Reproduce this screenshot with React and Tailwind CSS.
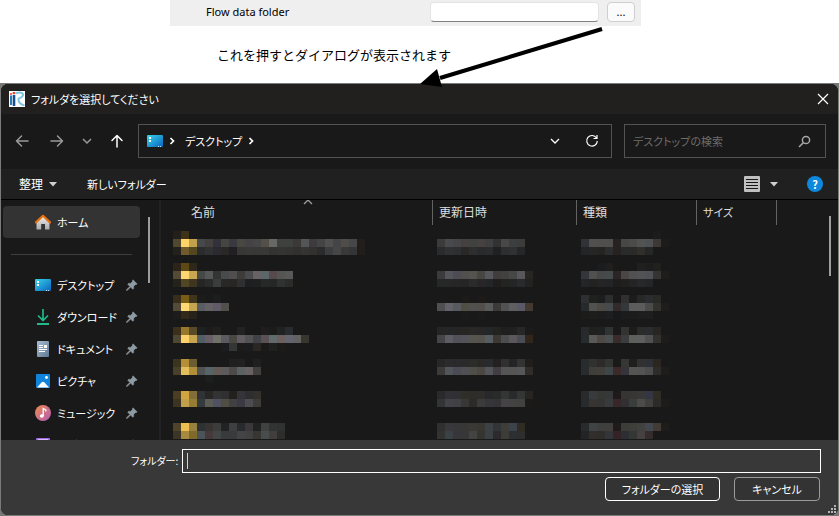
import React from "react";

const JP = "font-['Noto_Sans','Noto_Sans_CJK_JP',sans-serif]";
const UI = "font-['Noto_Sans_CJK_JP',sans-serif] [font-feature-settings:'palt']";

// Censored file rows: each string is one line of 8px blocks, "-" leaves a block empty.
const FILES = [
  {
    name: [
      "231f1a 3d3118",
      "51482f ffd366 c2a14d 45494b 44403f 33323a 454544 3a3940 484840 434346 464647 545048 666965 3f413d 3f413f 3b3938 545655 3d3b3d 444445 505051 454446 504d49 454749 231e1b",
      "24211c 705a2b 54471f 2a2b2b 303133 2c2a2e 292826 202023 373736 393939 383838 383837 333332 343534 323332 31302f 343434 323130 2a2b2c 3d3d3e 464646 39393a 353536 211d1b",
    ],
    date: [
      "",
      "3b3b3b 484a4e 464648 454140 404141 474241 3f3f40 333233 484947 3d3e3f 3c3c3b",
      "2a2b2d 303133 2e2f31 292827 2d2e2f 2b2a2a 2b2c2d 212121 2d2e2f 303132 262626",
    ],
    type: [
      "- - - - - - - - - 1c1c1c",
      "303238 51504e 504f4d 504f4e 252221 474746 4b4b4a 525355 4f5053 3d3833 1e1c1b",
      "232425 262625 242423 2b2d2f 252221 292a2b 2a2a29 302f2c 252626",
    ],
  },
  {
    name: [
      "2c2419 5e4814 2f271a",
      "544a34 ffd572 c8a750 464848 565857 343434 474b4b 504e4e 3e3c39 4b4b4d 686265 5a666a 564a4d 555555 585858",
      "25221b 524522 3e361f 252525 2a2b2b 3c3c3c 292828 272625 2e3032 1f1f1f 202020 272928 252626 303232 2b2b2a",
    ],
    date: [
      "",
      "3b3b3b 54545b 4e4b55 52504f 56524e 484643 56575c 403d3c 414140 464847 5a575c 272625",
      "262827 272727 262626 252525 2b2b2b 282627 242527 201e1d 222322 242525 292a2b 222221",
    ],
    type: [
      "- - 1b1c1d 201f1e - - - 202020 1d1d1d 20201f",
      "34343c 51504f 474849 454a4b 2b2526 484746 515151 535357 505156 363432 1f1d1c",
      "242526 222221 252525 222425 1e1c1c 20201f 242424 272829 242525",
    ],
  },
  {
    name: [
      "382d18 795d15 3f351d 1c1c1c - 1d1d1d",
      "544a35 ffd873 c6a550 5a5c64 656165 615a66 52504a",
      "1d1c1a 32291a 28231a",
    ],
    date: [
      "- - - 1c1b1a - 1c1b1a",
      "4f4f4f 626268 575a5e 504e45 52504e 514e4c 595a5a 3b3a38 515352 5f5f62 5b5965 43392f",
      "- - - 1b1b1b - 1c1b1b",
    ],
    type: [
      "2d2f30 20201f 1c1d1e 2c2d2d 1b1a1a 30312e 1c1c1c 272727 2b2c2f 292928",
      "262a2d 51514f 4d4947 454a4d 322a2a 35383b 5c5c5d 5c5c5c 4b4b4a 33322f 1e1d1c",
      "1c1c1b 1e1e1d 1c1c1c 1d1e1f - 1c1c1c 1c1c1c 1e1e1f 1e1e1e",
    ],
  },
  {
    name: [
      "3c301b 98782b 594b27 1d2122 1e1b1b 20201e - - 222222 - - 1f1d1d 1b1b1a 212222 2a2b2e",
      "504730 ffd16a c7a64e 525d64 685e67 70726a 5a5a60 484742 605c61 545155 40424a 5b5054 616b6c 6c5f5e 62646f 646162 37362f",
      "- - - - - - 1b1c20 353536 1b1b1a 1b1c1d 292623 1a1a19 1f2120 1d1a1a",
    ],
    date: [
      "252523 242526 252526 272624 292827 272728 232728 232321 1e1f1e 202020 272727 1d1b1a",
      "444449 5c5c62 52515a 54535a 56554e 55534b 575c63 3e3835 4b4d4e 5b575b 4b4d56 32251a",
    ],
    type: [
      "27292c 20201f 1e2223 313232 1a1a1a 333333 1c1c1b 2b2b2b 2b2c2f 272625",
      "262b2d 5a5958 4e4946 4a4f52 392c2b 3a3c3f 5e5e5d 5e5e5f 515151 32312e 1e1c1b",
    ],
  },
  {
    name: [
      "3d341e b48f35 6a5c33 - - - - 202020 212121 - 202020",
      "484029 e2be5d b18f38 505354 586367 645b57 5d5a5c 4d4b4a 5c6164 686262 41403f",
      "- - - - 1c1e1d",
    ],
    date: [
      "272728 2b2b2d 2a292b 2a2a28 2c2c28 2a2928 292a2d 222021 30302f 242426 333331 211d1b",
      "3d3b3a 51565a 4c4a54 504f53 4f4e47 4c4743 53555b 423d43 555555 555555 565759 302c29",
    ],
    type: [
      "282c2e 31312f 2c2b27 333533 1b1a1a 363633 1f1f1e 313131 2e3038 2b2720",
      "282c2e 403e3b 403f39 3e464a 3b2a29 34343a 555553 545353 4b4c4b 2d2c2a 1f1d1b",
    ],
  },
  {
    name: [
      "4b3d20 d0a540 836e3a 303335 292725 333334 303030 22211e 353439 2e2d30 32312c",
      "3c3423 c2a04b 977d34 353a3c 5c5c57 505261 504d43 414142 3b3944 4d4c51 3d3c39",
    ],
    date: [
      "2a2a2a 303035 303033 302e28 2d2d2a 2e2d2b 28282b 292b2b 343635 282a2c 343635 262523",
      "333435 424248 414044 393733 2b2b27 3b3b3b 36363a 353336 434443 434343 424241 1c1a19",
    ],
    type: [
      "282a2b 383a3b 363635 353738 1e1a1b 353533 373635 383839 343644 302d22",
      "272b2d 373533 353432 383b3d 372728 303032 393e3b 4b4b4b 403f3e 2b2b2a 1e1c1b",
    ],
  },
  {
    name: [
      "4f4328 edbf4e 99803f 2d3132 393434 3b3c3b 212222 403f3f 292a2d 3a383b 212223 404241 323333 303131",
      "3c3425 a78a40 806a2b 4b5559 45393a 434646 383a3b 383b3d 444446 414142 383632 474c4d 413e3d 2d2d2d",
    ],
    date: [
      "303031 38383d 373639 373736 3b3934 393732 3b4144 333435 3f3d39 3b444a 302c24",
      "333331 3a4246 37363a 373739 434341 343430 3b4143 2c2a2c 3e3c39 2d3033 2d2e2d",
    ],
    type: [
      "282b2c 404444 3e3f3f 403f3d 1f1b1c 3c3c39 3e3e3b 414140 434850 413b34 1f1d1b",
      "232425 312e2c 2f2e2a 34353b 352425 2c2e34 343834 464040 352d2c",
    ],
  },
];

function Mosaic({ lines }) {
  const grid = lines.map((l) => l.split(" "));
  const cols = Math.max(...grid.map((l) => l.length));
  return (
    <svg width={cols * 8} height={24} shapeRendering="crispEdges" aria-hidden="true" className="block">
      {grid.flatMap((line, y) =>
        line.map((c, x) =>
          c.length === 6 ? <rect key={`${x}-${y}`} x={x * 8} y={y * 8} width="8" height="8" fill={`#${c}`} /> : null
        )
      )}
    </svg>
  );
}

function Chevron({ dir = "down", className = "", size = 10, width = 1.3 }) {
  const d = { down: "M1 3l4 4 4-4", up: "M1 7l4-4 4 4", right: "M3.5 2l3 3-3 3" }[dir];
  return (
    <svg width={size} height={size} viewBox="0 0 10 10" className={className} fill="none" stroke="currentColor" strokeWidth={width}>
      <path d={d} />
    </svg>
  );
}

function Arrow({ rotate = "" }) {
  return (
    <svg width="14" height="14" viewBox="0 0 14 14" fill="none" stroke="currentColor" strokeWidth="1.5" strokeLinecap="round" strokeLinejoin="round" className={rotate}>
      <path d="M13 7H1.5M6.5 2L1.5 7l5 5" />
    </svg>
  );
}

function Caret() {
  return (
    <svg width="8" height="5" viewBox="0 0 8 5">
      <path d="M0 0h8L4 4.6z" fill="#d0d0d0" />
    </svg>
  );
}

function AppLogo() {
  return (
    <svg width="16" height="16" viewBox="0 0 16 16" aria-hidden="true">
      <rect width="16" height="16" fill="#fff" />
      <path d="M1 4.500h2V14H1z" fill="#2e78b8" />
      <path d="M3.700 4h2.600v11H3.700z" fill="#164f90" />
      <rect x="1" y="2" width="2" height="2" fill="#ee6a55" />
      <rect x="3.700" y="1" width="2.600" height="2.200" fill="#e5402e" />
      <path d="M7 2.300c3.800-1.400 7.200-.9 7 1.700-.2 2.200-2.600 3-4.400 3.600C9 10.500 11 13.200 15.500 14.400" fill="none" stroke="#7cc6e2" strokeWidth="2" />
    </svg>
  );
}

function DesktopIcon() {
  return (
    <svg width="16" height="16" viewBox="0 0 16 16" aria-hidden="true">
      <defs>
        <linearGradient id="desk" x1="0" y1="0" x2="1" y2="1">
          <stop offset="0" stopColor="#36d4ea" />
          <stop offset="1" stopColor="#0b63c0" />
        </linearGradient>
      </defs>
      <rect y="2" width="16" height="12" rx="1" fill="url(#desk)" />
      <path d="M2 4h2v2H2zM2 7h2v2H2z" fill="#fff" />
      <path d="M11 13h1v1h-1zM13 13h1v1h-1z" fill="#bfe4ff" />
    </svg>
  );
}

function HomeIcon() {
  return (
    <svg width="16" height="16" viewBox="0 0 16 16" aria-hidden="true">
      <defs>
        <linearGradient id="wall" x1="0" y1="0" x2="0" y2="1">
          <stop offset="0" stopColor="#f1f1f1" />
          <stop offset="1" stopColor="#a9a9a9" />
        </linearGradient>
      </defs>
      <path d="M1.500 7.500L8 2l6.500 5.500V15a.6.6 0 0 1-.6.6H10V10H6.200v5.600H2.100a.6.6 0 0 1-.6-.6z" fill="url(#wall)" />
      <path d="M1 8.400L8 1.800l7 6.600" fill="none" stroke="#e8710f" strokeWidth="2.200" strokeLinecap="round" strokeLinejoin="round" />
    </svg>
  );
}

function DownloadIcon() {
  return (
    <svg width="16" height="16" viewBox="0 0 16 16" aria-hidden="true" fill="none" stroke="#22b88a" strokeWidth="1.700">
      <path d="M8 0v11M3 6.500L8 11.500l5-5" />
      <path d="M2 15h12" strokeWidth="2" />
    </svg>
  );
}

function DocumentIcon() {
  return (
    <svg width="16" height="16" viewBox="0 0 16 16" aria-hidden="true">
      <defs>
        <linearGradient id="doc" x1="0" y1="0" x2="1" y2="1">
          <stop offset="0" stopColor="#a9bdd2" />
          <stop offset="1" stopColor="#5f7893" />
        </linearGradient>
      </defs>
      <rect x="2" width="12" height="16" rx="1" fill="url(#doc)" />
      <path d="M4 4h4v1H4zM4 6h4v1H4zM9 4h3v3H9zM4 8h8v1H4zM4 10h6v1H4z" fill="#fff" />
    </svg>
  );
}

function PictureIcon() {
  return (
    <svg width="16" height="16" viewBox="0 0 16 16" aria-hidden="true">
      <rect x="1" y="1" width="14" height="14" rx="1" fill="#1283da" />
      <path d="M2 14.500L6.500 9.500q1.500-1.600 3 0l4.500 5z" fill="#fff" />
      <circle cx="11.500" cy="4.500" r="1.400" fill="#fff" />
    </svg>
  );
}

function MusicIcon() {
  return (
    <svg width="16" height="16" viewBox="0 0 16 16" aria-hidden="true">
      <defs>
        <linearGradient id="mus" x1="0" y1="0" x2="1" y2="1">
          <stop offset="0" stopColor="#f08a4b" />
          <stop offset="1" stopColor="#b25cb8" />
        </linearGradient>
      </defs>
      <circle cx="8" cy="8" r="8" fill="url(#mus)" />
      <ellipse cx="6.800" cy="11" rx="2" ry="1.800" fill="#fff" />
      <path d="M8.200 11V3.500l2.600 1.300v1.800" fill="none" stroke="#fff" strokeWidth="1.300" />
    </svg>
  );
}

function VideoIcon() {
  return (
    <svg width="16" height="16" viewBox="0 0 16 16" aria-hidden="true">
      <rect x="1" y="1" width="14" height="14" rx="1" fill="#a26be6" />
      <path d="M3 2h10v1H3z" fill="#d9b8ff" />
    </svg>
  );
}

function PinIcon() {
  return (
    <svg width="12" height="12" viewBox="0 0 12 12" aria-hidden="true">
      <path d="M7 .8L11.200 5l-1 .6-.6-.1-2 2 .1 1.900-.9.9L4.600 8.100 1.400 11.300l-.9.200.2-.9L3.900 7.400 1.700 5.200l.9-.9 1.900.1 2-2-.1-.6z" fill="#8f9ba3" stroke="#8f9ba3" strokeWidth=".6" />
    </svg>
  );
}

const PLACES = [
  ["デスクトップ", DesktopIcon],
  ["ダウンロード", DownloadIcon],
  ["ドキュメント", DocumentIcon],
  ["ピクチャ", PictureIcon],
  ["ミュージック", MusicIcon],
  ["ビデオ", VideoIcon],
];

const HEADERS = [
  ["名前", "pl-[30px] text-[12px]"],
  ["更新日時", "pl-1.5 text-[12px]"],
  ["種類", "pl-1.5 text-[12px]"],
  ["サイズ", "pl-1.5 text-[11px]"],
];

function Setting() {
  return (
    <div className="ml-[170px] flex h-[26px] w-[471px] items-center bg-[#efefef] pb-0.5 pl-9 pr-1.5 text-black">
      <label htmlFor="flow" className="grow text-[11px] leading-4 font-['Noto_Sans',sans-serif]">Flow data folder</label>
      <input id="flow" className="h-5 w-[169px] rounded-sm border border-[#e4e4e4] border-b-[#808080] bg-white px-1 text-xs" />
      <button type="button" aria-label="参照" className="ml-2 h-5 w-7 rounded border border-[#cfcfcf] bg-[#fbfbfb] text-[11px] leading-4">...</button>
    </div>
  );
}

export default function App() {
  return (
    <main className="relative bg-white">
      <Setting />
      <p className={`${JP} h-[57px] pl-[217px] pt-5 text-[13px] leading-[18px] text-black`}>これを押すとダイアログが表示されます</p>

      <svg className="absolute left-1/2 top-6 z-10" width="190" height="66" viewBox="0 0 190 66" aria-hidden="true">
        <path d="M182 5L20 54" stroke="#000" strokeWidth="4" />
        <path d="M0 60L17 45 22 63z" fill="#000" />
      </svg>

      <div className="bg-[#777777]">
        <section role="dialog" aria-label="フォルダを選択してください" className={`${UI} overflow-hidden rounded-lg border border-[#7b7b7b] bg-[#191919] text-[11px] leading-4 text-white`}>
          <header className="flex h-[30px] items-center bg-[#21201f] pl-2 pr-[9px]">
            <AppLogo />
            <h1 className="ml-1.5 grow">フォルダを選択してください</h1>
            <button type="button" aria-label="閉じる">
              <svg width="12" height="12" viewBox="0 0 12 12" stroke="#fff" strokeWidth="1.200"><path d="M1 1l10 10M11 1L1 11" /></svg>
            </button>
          </header>

          <nav className="flex h-[55px] items-center pb-px pl-3.5 pr-3 text-[#9a9a9a]">
            <button type="button" aria-label="戻る"><Arrow /></button>
            <button type="button" aria-label="進む" className="ml-[21px]"><Arrow rotate="rotate-180" /></button>
            <button type="button" aria-label="履歴" className="ml-[18px]"><Chevron width={1.500} /></button>
            <button type="button" aria-label="上へ" className="ml-[18px] text-white"><Arrow rotate="rotate-90" /></button>
            <div className="ml-3.5 flex h-[34px] grow items-center border border-[#535353] pl-2 pr-3 text-white">
              <DesktopIcon />
              <Chevron dir="right" className="ml-1" width={1.700} />
              <span className="ml-2">デスクトップ</span>
              <Chevron dir="right" className="ml-1" width={1.700} />
              <button type="button" aria-label="候補" className="ml-auto"><Chevron /></button>
              <button type="button" aria-label="更新" className="ml-[25px]">
                <svg width="14" height="14" viewBox="0 0 14 14" fill="none" stroke="#fff" strokeWidth="1.200"><path d="M11.500 4A5.300 5.300 0 1 0 12.300 7M12 1v3.500H8.500" /></svg>
              </button>
            </div>
            <div className="ml-3 flex h-[34px] w-[202px] items-center border border-[#535353] pl-2 pr-3.5">
              <input aria-label="検索" placeholder="デスクトップの検索" className="min-w-0 grow bg-transparent outline-none placeholder:text-[#6d6d6d]" />
              <svg width="13" height="13" viewBox="0 0 13 13" fill="none" stroke="#a6a6a6" strokeWidth="1.500"><circle cx="8" cy="5" r="3.600" /><path d="M5.400 7.600L1 12" /></svg>
            </div>
          </nav>

          <div className="flex h-[31px] items-center border-b border-black bg-[#202020] pl-[18px] pr-[15px]">
            <button type="button" className="flex items-center gap-1.5 text-[12px]">整理 <Caret /></button>
            <button type="button" className="ml-[30px]">新しいフォルダー</button>
            <button type="button" aria-label="表示" className="ml-auto flex items-center gap-2.5">
              <svg width="16" height="16" viewBox="0 0 16 16"><rect width="16" height="16" rx="1" fill="#c0c0c0" /><path d="M2 3.500h12M2 6.500h12M2 9.500h12M2 12.500h12" stroke="#161616" /></svg>
              <Caret />
            </button>
            <button type="button" aria-label="ヘルプ" className="ml-[29px] h-4 w-4 rounded-full bg-[#0e88dc] text-center text-[11px] font-bold leading-4">?</button>
          </div>

          <div className="flex h-60 overflow-hidden">
            <aside className="flex w-40 shrink-0 border-r-2 border-[#232323]">
              <div className="ml-0.5 w-[137px] pt-1.5">
                <a href="#home" className="flex h-8 items-center gap-1.5 rounded-sm bg-[#333333] pl-8"><HomeIcon />ホーム</a>
                <hr className="mx-2 mb-3.5 mt-4 border-[#3e3e3e]" />
                <ul>
                  {PLACES.map(([name, Icon]) => (
                    <li key={name}>
                      <a href={`#${name}`} className="flex h-8 items-center gap-1.5 pl-8 pr-0.5">
                        <Icon />
                        <span className="grow whitespace-nowrap">{name}</span>
                        <PinIcon />
                      </a>
                    </li>
                  ))}
                </ul>
              </div>
              <div className="ml-2 mt-[17px] h-[66px] w-0.5 bg-[#9d9d9d]" />
            </aside>

            <div className="flex grow justify-between">
              <table className="w-[616px] table-fixed border-collapse text-left">
                <colgroup>
                  <col className="w-[272px]" />
                  <col className="w-36" />
                  <col className="w-[120px]" />
                  <col className="w-20" />
                </colgroup>
                <thead>
                  <tr className="h-[31px] align-top">
                    {HEADERS.map(([h, pad], i) => (
                      <th key={h} scope="col" className="p-0 font-normal text-[#dedede]">
                        <div className={`relative h-[25px] border-r border-[#636363] pt-1 ${pad}`}>
                          {h}
                          {i === 0 && <Chevron dir="up" className="absolute left-[142px] top-[-3px] text-[#a0a0a0]" />}
                        </div>
                      </th>
                    ))}
                  </tr>
                </thead>
                <tbody>
                  {FILES.map((f, i) => (
                    <tr key={i} className="h-8 align-top">
                      <td className="p-0 pl-3"><Mosaic lines={f.name} /></td>
                      <td className="p-0 pl-1"><Mosaic lines={f.date} /></td>
                      <td className="p-0 pl-1"><Mosaic lines={f.type} /></td>
                      <td />
                    </tr>
                  ))}
                </tbody>
              </table>
              <div className="mr-[7px] mt-4 h-[60px] w-0.5 bg-[#9d9d9d]" />
            </div>
          </div>

          <footer className="relative h-[75px] bg-[#383838] pl-[130px] pr-[17px] pt-[9px]">
            <div className="flex items-center">
              <label htmlFor="folder" className="w-[51px] whitespace-nowrap text-[10px]">フォルダー:</label>
              <div className="flex h-6 grow items-center border border-white pl-1">
                <span className="h-4 w-px bg-[#d0d0d0]" />
                <input id="folder" className="min-w-0 grow bg-transparent outline-none" />
              </div>
            </div>
            <div className="mt-1 flex justify-end gap-3.5 pr-px">
              <button type="button" className="h-6 w-[115px] rounded border border-white bg-[#333333]">フォルダーの選択</button>
              <button type="button" className="h-6 w-[86px] rounded border border-[#9b9b9b] bg-[#333333]">キャンセル</button>
            </div>
            <svg className="absolute bottom-0.5 right-0.5" width="8" height="8" viewBox="0 0 8 8" fill="#b5b5b5" shapeRendering="crispEdges" aria-hidden="true">
              <path d="M6 0h2v2H6zM3 3h2v2H3zM6 3h2v2H6zM0 6h2v2H0zM3 6h2v2H3zM6 6h2v2H6z" />
            </svg>
          </footer>
        </section>
      </div>
    </main>
  );
}
